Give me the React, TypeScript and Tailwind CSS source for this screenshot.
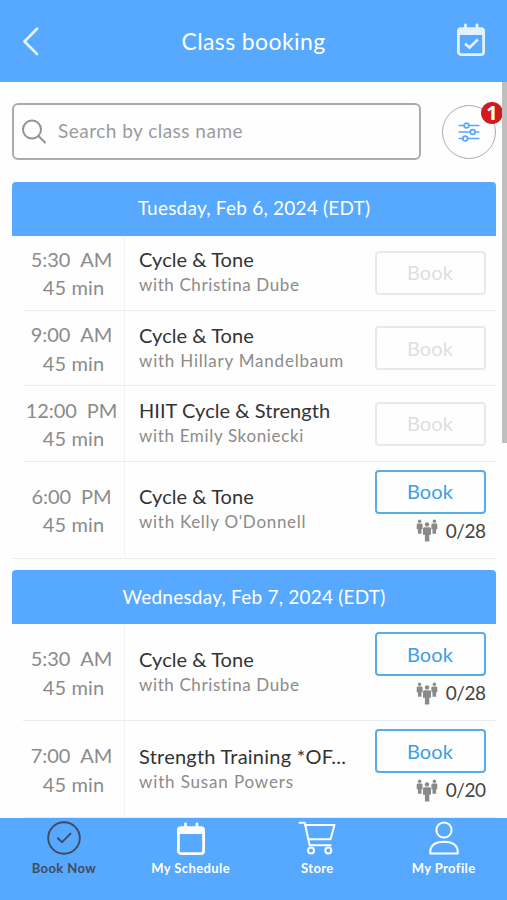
import { useState } from "react";

type ClassItem = {
  time: string;
  period: string;
  name: string;
  teacher: string;
  spots?: string;
  nameSpacing: string;
  teacherSpacing: string;
};

type Day = { date: string; classes: ClassItem[] };

const days: Day[] = [
  {
    date: "Tuesday, Feb 6, 2024 (EDT)",
    classes: [
      { time: "5:30", period: "AM", name: "Cycle & Tone", teacher: "Christina Dube", nameSpacing: "tracking-[0.05px]", teacherSpacing: "tracking-[0.6px]" },
      { time: "9:00", period: "AM", name: "Cycle & Tone", teacher: "Hillary Mandelbaum", nameSpacing: "tracking-[0.05px]", teacherSpacing: "tracking-[0.78px]" },
      { time: "12:00", period: "PM", name: "HIIT Cycle & Strength", teacher: "Emily Skoniecki", nameSpacing: "tracking-[0.05px]", teacherSpacing: "tracking-[0.65px]" },
      { time: "6:00", period: "PM", name: "Cycle & Tone", teacher: "Kelly O'Donnell", spots: "0/28", nameSpacing: "tracking-[0.05px]", teacherSpacing: "tracking-[0.7px]" },
    ],
  },
  {
    date: "Wednesday, Feb 7, 2024 (EDT)",
    classes: [
      { time: "5:30", period: "AM", name: "Cycle & Tone", teacher: "Christina Dube", spots: "0/28", nameSpacing: "tracking-[0.05px]", teacherSpacing: "tracking-[0.6px]" },
      { time: "7:00", period: "AM", name: "Strength Training *OF...", teacher: "Susan Powers", spots: "0/20", nameSpacing: "tracking-[0.23px]", teacherSpacing: "tracking-[0.85px]" },
    ],
  },
];

function CalendarIcon({ checked }: { checked?: boolean }) {
  return (
    <svg width="30" height="34" viewBox="0 0 30 34" fill="none" stroke="currentColor">
      <path d="M9.5 2v5M21 2v5" strokeWidth="2.8" strokeLinecap="round" />
      <rect x="2.4" y="5.6" width="25.2" height="26" rx="2.5" strokeWidth="2.8" />
      <path d="M2 5.5h26v6.5H2z" fill="currentColor" stroke="none" />
      {checked && <path d="M9 20.5l4.5 4.2 8.3-8.2" strokeWidth="2.6" />}
    </svg>
  );
}

function PeopleIcon() {
  return (
    <svg width="22" height="23" viewBox="0 0 22 23" fill="#8a8a8a">
      <circle cx="3.6" cy="2.2" r="1.7" />
      <path d="M1.8 4.5h3.6q1.2 0 1.2 1.3v4.4H5.5v4.5H1.9v-4.5H.7V5.8q0-1.3 1.1-1.3z" />
      <circle cx="18.4" cy="2.2" r="1.7" />
      <path d="M16.6 4.5h3.6q1.1 0 1.1 1.3v4.4h-1.2v4.5h-3.6v-4.5h-1.1V5.8q0-1.3 1.2-1.3z" />
      <circle cx="11" cy="5.4" r="2.2" />
      <path d="M8.5 8.3h5q1.5 0 1.5 1.5v6h-1.7v6.6H8.9v-6.6H7v-6q0-1.5 1.5-1.5z" />
    </svg>
  );
}

function ClassRow({ item, last }: { item: ClassItem; last: boolean }) {
  return (
    <div className={`flex ${item.spots ? "h-[97px]" : "h-[75.4px]"} ${last ? "" : "pl-[11px]"}`}>
      <div
        className={`flex shrink-0 flex-col justify-center border-r border-b border-r-[#f1f3f3] border-b-[#e9ecec] text-center text-[20px] leading-[28.5px] text-[#8b8b8b] ${
          last ? "w-[113px] pl-[11px]" : "w-[102px]"
        }`}
      >
        <div className="-ml-1 pt-px tracking-[-0.1px] whitespace-nowrap">
          {item.time}
          <span className="ml-[10px]">{item.period}</span>
        </div>
        <div className="tracking-[0.1px]">45 min</div>
      </div>
      <div className="flex min-w-0 flex-1 items-center border-b border-[#e9ecec] pl-[14px]">
        <div className="-mt-[2px] min-w-0 flex-1 whitespace-nowrap">
          <div className={`text-[20px] leading-[26px] text-[#333] ${item.nameSpacing}`}>{item.name}</div>
          <div className={`text-[17px] leading-[25px] text-[#8b8b8b] ${item.teacherSpacing}`}>with {item.teacher}</div>
        </div>
        <div className={`mr-[10.5px] w-[111px] shrink-0 ${item.spots ? "-mt-[7px]" : ""}`}>
          <button
            disabled={!item.spots}
            className={`block h-[44px] w-full rounded-[4px] border-2 text-[20px] leading-[39px] tracking-[0.1px] ${
              item.spots ? "border-[#57ace9] text-[#3b9ee8]" : "border-[#e9e9e9] text-[#dedede]"
            }`}
          >
            Book
          </button>
          {item.spots && (
            <div className="mt-[5px] flex h-[24px] items-center justify-end gap-[8px] text-[19px] tracking-[-0.5px] text-[#444]">
              <PeopleIcon />
              {item.spots}
            </div>
          )}
        </div>
      </div>
    </div>
  );
}

export default function App() {
  const [query, setQuery] = useState("");

  return (
    <div className="relative flex h-[900px] w-[507px] flex-col overflow-hidden bg-[#fefefe] font-['Lato','Open_Sans',sans-serif]">
      <header className="flex h-[82px] shrink-0 items-center justify-between bg-[#57a8ff] pr-[21px] pl-[21px] text-white">
        <svg width="30" height="30" viewBox="0 0 30 30" fill="none" stroke="#e4f2ff" strokeWidth="2.7" strokeLinecap="round" strokeLinejoin="round">
          <path d="M16 2.8L3.5 15.5 16 28" />
        </svg>
        <h1 className="text-[23px] tracking-[0.4px]">Class booking</h1>
        <div className="-mt-[2px] text-[#e4f2ff]">
          <CalendarIcon checked />
        </div>
      </header>

      <main className="min-h-0 flex-1 overflow-hidden px-[12px] pt-[21px] pr-[11px]">
        <div className="flex h-[57px] items-center justify-between">
          <label className="flex h-[57px] w-[409px] items-center gap-[10px] rounded-[6px] border-2 border-[#a9adad] pl-[8px]">
            <svg width="26" height="26" viewBox="0 0 26 26" fill="none" stroke="#8e9292" strokeWidth="2" strokeLinecap="round">
              <circle cx="10" cy="10.5" r="9" />
              <path d="M16.5 17l6.5 6.5" />
            </svg>
            <input
              value={query}
              onChange={(e) => setQuery(e.target.value)}
              placeholder="Search by class name"
              className="w-[320px] text-[19px] tracking-[0.48px] outline-none placeholder:text-[#989c9e]"
            />
          </label>
          <button className="relative flex h-[54px] w-[54px] items-center justify-center rounded-full border-[1.5px] border-[#a9adad]">
            <svg width="22" height="20" viewBox="0 0 22 20" fill="none" stroke="#57a8ff" strokeWidth="1.7" strokeLinecap="round">
              <path d="M1.3 3.5H6M11 3.5h9.7M1.3 10h10.9M17.2 10h3.5M1.3 16.5h3.4M9.7 16.5h11" />
              <circle cx="8.5" cy="3.5" r="2.4" />
              <circle cx="14.7" cy="10" r="2.4" />
              <circle cx="7.2" cy="16.5" r="2.4" />
            </svg>
            <span className="absolute -top-[4px] -right-[8px] flex h-[22px] w-[22px] items-center justify-center rounded-full bg-[#d11a1e] font-['Noto_Sans',sans-serif] text-[20px] leading-none font-bold text-white">
              1
            </span>
          </button>
        </div>

        {days.map((day, index) => (
          <section key={day.date} className={index === 0 ? "mt-[21.6px]" : "mt-[11.6px]"}>
            <h2 className="flex h-[54px] items-center justify-center rounded-t-[4px] bg-[#57a8ff] pb-px text-[19px] tracking-[0.22px] text-white">
              {day.date}
            </h2>
            {day.classes.map((item, i) => (
              <ClassRow key={item.time + item.period} item={item} last={index === 0 && i === day.classes.length - 1} />
            ))}
          </section>
        ))}
      </main>

      <nav className="grid h-[82px] shrink-0 grid-cols-4 bg-[#57a8ff] pt-[3px] text-[13px] font-bold text-white">
        <div className="flex flex-col items-center pl-px text-[#414b5c]">
          <svg width="34" height="34" viewBox="0 0 34 34" fill="none" stroke="currentColor" strokeWidth="1.9" strokeLinecap="round" strokeLinejoin="round">
            <circle cx="17" cy="17" r="15.8" />
            <path d="M10.8 17.2l4.3 4 8.4-8.6" />
          </svg>
          <span className="mt-[4px] tracking-[0.4px]">Book Now</span>
        </div>
        <div className="flex flex-col items-center pl-px">
          <div className="h-[34px] pt-[1px]">
            <CalendarIcon />
          </div>
          <span className="mt-[4px] tracking-[0.4px]">My Schedule</span>
        </div>
        <div className="flex flex-col items-center pl-px">
          <svg width="38" height="34" viewBox="0 0 38 34" fill="none" stroke="currentColor" strokeWidth="2" strokeLinecap="round" strokeLinejoin="round">
            <path d="M1.5 1.8h5.3l4.8 22.5h21M7.2 4h29.3L32.5 18.3H10.5" />
            <circle cx="13" cy="29.6" r="3" />
            <circle cx="30.3" cy="29.6" r="3" />
          </svg>
          <span className="mt-[4px] tracking-[0.4px]">Store</span>
        </div>
        <div className="flex flex-col items-center">
          <svg width="30" height="34" viewBox="0 0 30 34" fill="none" stroke="currentColor" strokeWidth="2" strokeLinejoin="round">
            <circle cx="15" cy="9" r="7.6" />
            <path d="M1.3 32.5v-2.2c0-5.5 4.7-9.5 13.7-9.5s13.7 4 13.7 9.5v2.2z" />
          </svg>
          <span className="mt-[4px] tracking-[0.4px]">My Profile</span>
        </div>
      </nav>

      <div className="absolute top-[82px] right-0 h-[361px] w-[5px] bg-[#bfbfbf]" />
    </div>
  );
}
